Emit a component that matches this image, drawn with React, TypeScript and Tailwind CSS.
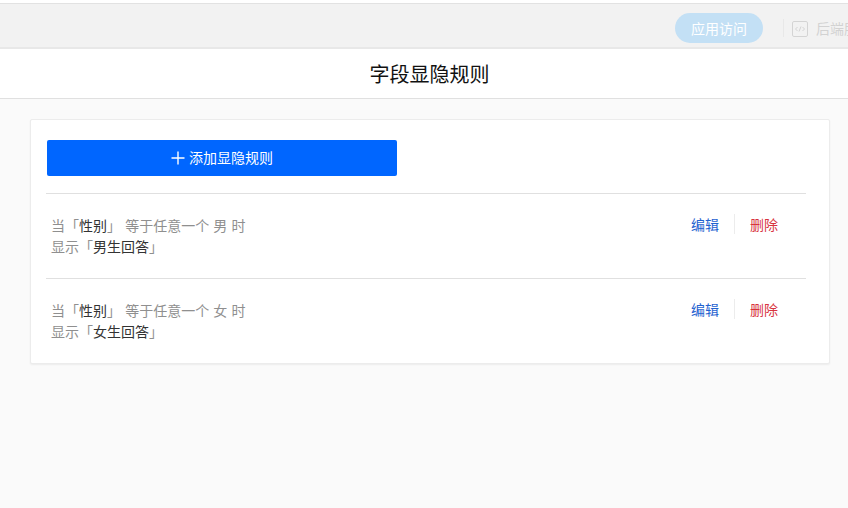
import React from "react";

function Rule({ gender, target }: { gender: string; target: string }) {
  return (
    <div className="h-[85px] w-[760px] border-t border-[#e0e0e0] flex justify-between pt-[20px]">
      <div className="pl-[5px] pt-px text-[14px] leading-[21px] text-[#8f8f8f] [word-spacing:1px]">
        <div>
          当「<span className="text-[#333]">性别</span>」 等于任意一个 {gender} 时
        </div>
        <div>
          显示「<span className="text-[#333]">{target}</span>」
        </div>
      </div>
      <div className="flex items-start text-[14px] leading-[21px] pr-[28px]">
        <span className="text-[#1f62d0] w-[43px]">编辑</span>
        <span className="w-px h-[20px] bg-[#ececec] mr-[15px]" />
        <span className="text-[#d8343f]">删除</span>
      </div>
    </div>
  );
}

export default function App() {
  return (
    <div
      className="w-[848px] h-[508px] overflow-hidden flex flex-col bg-[#fafafa]"
      style={{ fontFamily: '"Noto Sans CJK SC", "Liberation Sans", sans-serif' }}
    >
      <div className="h-[4px] bg-white border-b border-[#e2e2e2] shrink-0" />
      <div className="h-[45px] shrink-0 bg-[#f2f2f2] flex items-center justify-end overflow-hidden border-b-2 border-[#e8e8e8]">
        <div className="w-[88px] h-[30px] mt-[4px] rounded-full bg-[#c3e0f5] text-white text-[14px] flex items-center justify-center shrink-0 pt-px">
          应用访问
        </div>
        <div className="w-px h-[18px] mt-[4px] bg-[#e8e8e8] ml-[20px] shrink-0" />
        <svg className="ml-[8px] mt-[6px] shrink-0" width="16" height="16" viewBox="0 0 16 16" fill="none" stroke="#d4d4d4" strokeWidth="1">
          <rect x="0.5" y="0.5" width="15" height="15" rx="1.5" />
          <path d="M5.5 6 3.5 8l2 2M10.5 6l2 2-2 2M9 5.5 7 10.5" />
        </svg>
        <div className="ml-[8px] w-[32px] overflow-hidden whitespace-nowrap text-[14px] text-[#d2d2d2] shrink-0 mt-[5px]">
          后端服务
        </div>
      </div>
      <div className="h-[50px] shrink-0 bg-white border-b border-[#e0e0e0] flex items-center justify-center pl-[11px] text-[20px] text-[#111]">
        字段显隐规则
      </div>
      <div className="px-[30px] pt-[20px]">
        <div className="h-[245px] w-[800px] bg-white border border-[#ececec] rounded-[2px] shadow-[0_1px_2px_rgba(0,0,0,0.06)] px-[15px] pt-[20px]">
          <button className="ml-px w-[350px] h-[36px] bg-[#0066ff] rounded-[2px] text-white text-[14px] flex items-center justify-center gap-[4px] pb-px">
            <svg width="14" height="14" viewBox="0 0 14 14" stroke="white" strokeWidth="1.4">
              <path d="M7 0.5v13M0.5 7h13" />
            </svg>
            添加显隐规则
          </button>
          <div className="mt-[17px]">
            <Rule gender="男" target="男生回答" />
            <Rule gender="女" target="女生回答" />
          </div>
        </div>
      </div>
    </div>
  );
}
